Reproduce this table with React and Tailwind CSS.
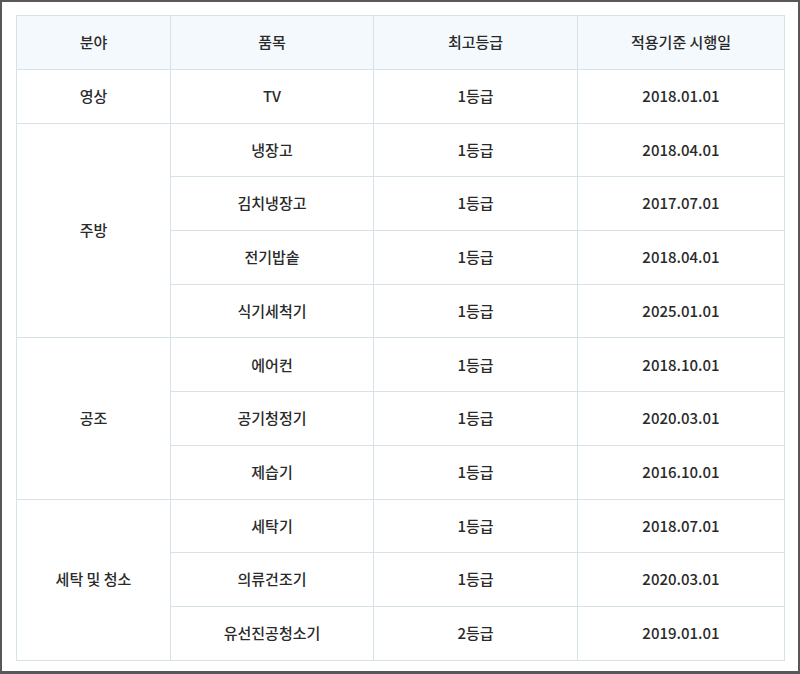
import React from "react";

const groups = [
  { name: "영상", items: [["TV", "1등급", "2018.01.01"]] },
  {
    name: "주방",
    items: [
      ["냉장고", "1등급", "2018.04.01"],
      ["김치냉장고", "1등급", "2017.07.01"],
      ["전기밥솥", "1등급", "2018.04.01"],
      ["식기세척기", "1등급", "2025.01.01"],
    ],
  },
  {
    name: "공조",
    items: [
      ["에어컨", "1등급", "2018.10.01"],
      ["공기청정기", "1등급", "2020.03.01"],
      ["제습기", "1등급", "2016.10.01"],
    ],
  },
  {
    name: "세탁 및 청소",
    items: [
      ["세탁기", "1등급", "2018.07.01"],
      ["의류건조기", "1등급", "2020.03.01"],
      ["유선진공청소기", "2등급", "2019.01.01"],
    ],
  },
];

const cell = "border border-[#d6e2ea] text-center align-middle p-0";

const App = () => {
  return (
    <div
      className="w-[800px] h-[674px] bg-white border-2 border-b-[3px] border-[#585858] pt-[13px] pl-[14px] text-[15px] font-medium text-[#2a2a2a]"
      style={{ fontFamily: '"Noto Sans CJK KR", "Noto Sans", sans-serif' }}
    >
      <table className="w-[768px] border-collapse border border-[#c9d8e2] table-fixed">
        <colgroup>
          <col className="w-[154px]" />
          <col className="w-[203px]" />
          <col className="w-[204px]" />
          <col className="w-[207px]" />
        </colgroup>
        <thead>
          <tr className="bg-[#f3f9fd] h-[54px]">
            <th className={cell + " font-medium"}>분야</th>
            <th className={cell + " font-medium"}>품목</th>
            <th className={cell + " font-medium"}>최고등급</th>
            <th className={cell + " font-medium"}>적용기준 시행일</th>
          </tr>
        </thead>
        <tbody>
          {groups.map((g) =>
            g.items.map((it, i) => (
              <tr key={g.name + it[0]} className="h-[53.7px]">
                {i === 0 && (
                  <td className={cell} rowSpan={g.items.length}>
                    {g.name}
                  </td>
                )}
                <td className={cell}>{it[0]}</td>
                <td className={cell}>{it[1]}</td>
                <td className={cell}>{it[2]}</td>
              </tr>
            ))
          )}
        </tbody>
      </table>
    </div>
  );
};

export default App;
